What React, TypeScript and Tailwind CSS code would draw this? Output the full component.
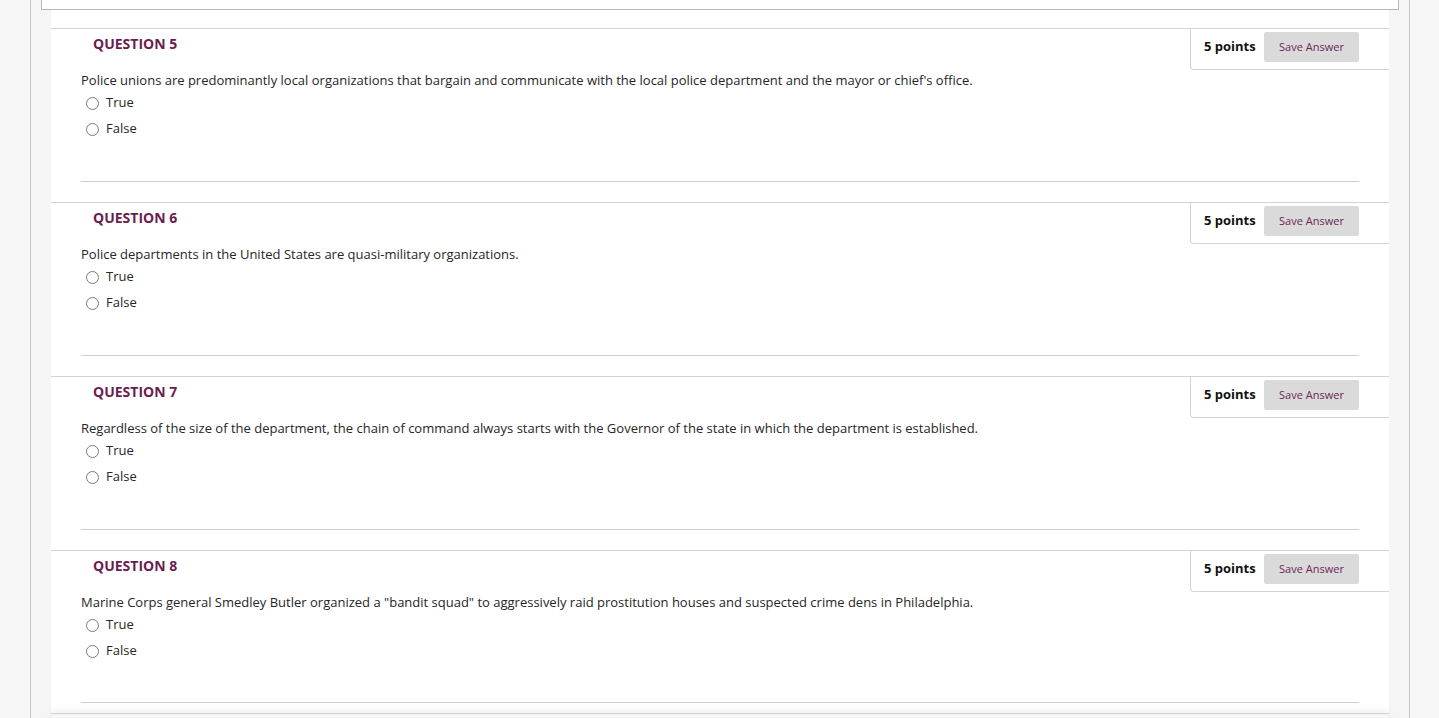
const questions = [
  {
    n: 5,
    text: "Police unions are predominantly local organizations that bargain and communicate with the local police department and the mayor or chief's office.",
  },
  {
    n: 6,
    text: 'Police departments in the United States are quasi-military organizations.',
  },
  {
    n: 7,
    text: 'Regardless of the size of the department, the chain of command always starts with the Governor of the state in which the department is established.',
  },
  {
    n: 8,
    text: 'Marine Corps general Smedley Butler organized a "bandit squad" to aggressively raid prostitution houses and suspected crime dens in Philadelphia.',
  },
];

function Radio({ label }: { label: string }) {
  return (
    <label className="flex h-[26px] items-center pl-[35px] text-[13px] text-[#262626]">
      <span className="inline-block h-[13px] w-[13px] rounded-full border border-[#7a7a7a] bg-white" />
      <span className="ml-[7px]">{label}</span>
    </label>
  );
}

function Question({ n, text, last }: { n: number; text: string; last: boolean }) {
  return (
    <div className="border-t border-[#d3d3d3]">
      <div className="flex items-start justify-between">
        <h3 className="mt-[5px] pl-[42px] text-[14px] font-bold uppercase leading-[20px] text-[#6b1d4f]">
          Question {n}
        </h3>
        <div className="flex w-[199px] items-center rounded-bl-[4px] border-b border-l border-[#d3d3d3] pb-[7px] pl-[13px] pr-[30px] pt-[3px]">
          <span className="text-[13px] font-bold text-[#111]">5 points</span>
          <button className="ml-auto h-[30px] w-[95px] rounded-[2px] bg-[#dadada] text-[11px] text-[#6e2757]">
            Save Answer
          </button>
        </div>
      </div>
      <p className="pl-[30px] text-[13px] leading-[20px] text-[#262626]">{text}</p>
      <Radio label="True" />
      <Radio label="False" />
      <div className={`mx-[30px] border-t border-[#cfcfcf] ${last ? 'mt-[38px]' : 'mt-[39px]'}`} />
      <div className={last ? 'h-[10px]' : 'h-[20px]'} />
    </div>
  );
}

export default function App() {
  return (
    <div className="h-[718px] overflow-hidden bg-[#f7f7f7] font-['Open_Sans',sans-serif]">
      <div className="ml-[30px] mr-[29px] h-full border-x border-[#c9c9c9] bg-[#f5f5f5]">
        <div className="relative z-10 mx-[10px] h-[10px] border-x border-b border-[#b8b8b8] bg-white" />
        <div className="ml-[20px] mr-[20px] -mt-[10px] bg-white pt-[28px]">
          {questions.map((q, i) => (
            <Question key={q.n} n={q.n} text={q.text} last={i === questions.length - 1} />
          ))}
          <div className="h-[40px] border-t border-[#cfcfcf] bg-[#f5f5f5] shadow-[0_-3px_6px_rgba(0,0,0,0.06)]" />
        </div>
      </div>
    </div>
  );
}
